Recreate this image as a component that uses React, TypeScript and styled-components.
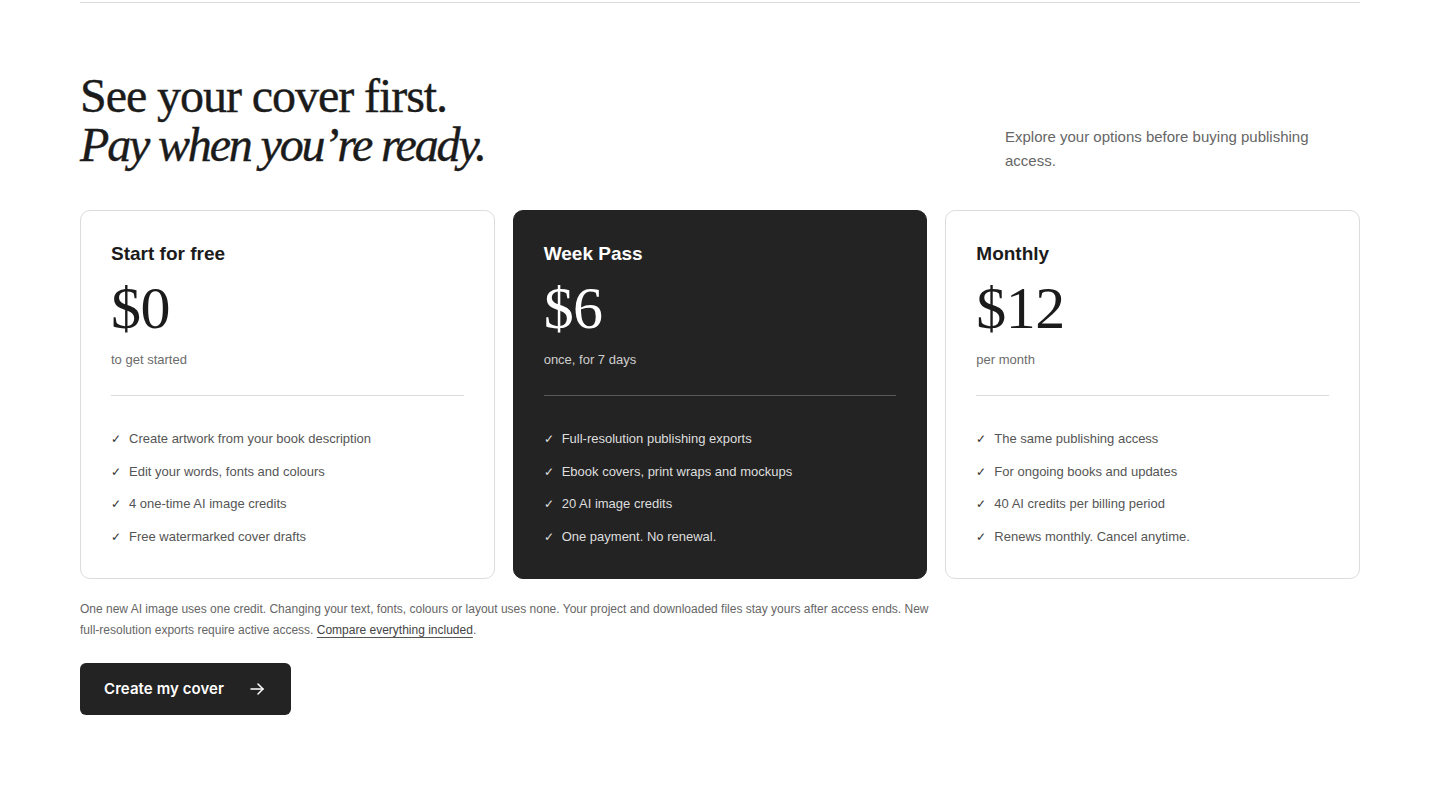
import React from 'react'
import styled, { createGlobalStyle } from 'styled-components'

const GlobalStyle = createGlobalStyle`
  html, body {
    margin: 0;
    padding: 0;
    background: #ffffff;
    font-family: "Liberation Sans", Arial, sans-serif;
    color: #1d1d1d;
  }
  * { box-sizing: border-box; }
`

const Page = styled.div`
  width: 1280px;
  margin: 0 auto;
  padding-top: 2px;
`

const TopRule = styled.div`
  border-top: 1px solid #dcdcdc;
`

const Header = styled.header`
  display: flex;
  justify-content: space-between;
  align-items: flex-end;
  margin-top: 68px;
`

const Headline = styled.h1`
  margin: 0;
  font-family: "Liberation Serif", "Times New Roman", serif;
  font-weight: 400;
  font-size: 48px;
  line-height: 49px;
  letter-spacing: -0.022em;
  color: #1b1b1b;
  -webkit-text-stroke: 0.4px #1b1b1b;

  em {
    display: block;
    font-style: italic;
    letter-spacing: -0.045em;
  }
`

const Intro = styled.p`
  margin: 0 0 -4px;
  width: 355px;
  font-size: 15px;
  line-height: 24px;
  color: #666666;
`

const Cards = styled.div`
  display: grid;
  grid-template-columns: repeat(3, 1fr);
  gap: 18px;
  margin-top: 41px;
`

const Card = styled.div<{ $dark?: boolean }>`
  display: flex;
  flex-direction: column;
  padding: 30px 30px 31px;
  border-radius: 10px;
  border: 1px solid ${p => (p.$dark ? '#232323' : '#dcdcdc')};
  background: ${p => (p.$dark ? '#232323' : '#ffffff')};
  color: ${p => (p.$dark ? '#ffffff' : '#1b1b1b')};
`

const PlanName = styled.h2`
  margin: 0;
  font-size: 19px;
  line-height: 25px;
  font-weight: 700;
`

const Price = styled.div`
  margin-top: 12px;
  font-family: "Liberation Serif", "Times New Roman", serif;
  font-size: 60px;
  line-height: 60px;
  letter-spacing: -0.01em;
`

const PriceNote = styled.p<{ $dark?: boolean }>`
  margin: 12px 0 0;
  font-size: 13px;
  line-height: 20px;
  color: ${p => (p.$dark ? '#cfcfcf' : '#6b6b6b')};
`

const Divider = styled.hr<{ $dark?: boolean }>`
  margin: 25px 0 0;
  border: 0;
  border-top: 1px solid ${p => (p.$dark ? '#5a5a5a' : '#dcdcdc')};
`

const Features = styled.ul`
  list-style: none;
  margin: 33px 0 0;
  padding: 0;
  display: flex;
  flex-direction: column;
  gap: 12.5px;
`

const Feature = styled.li<{ $dark?: boolean }>`
  display: flex;
  align-items: center;
  gap: 8px;
  font-size: 13px;
  line-height: 20px;
  color: ${p => (p.$dark ? '#dedede' : '#555555')};
`

const Check = styled.span<{ $dark?: boolean }>`
  width: 10px;
  font-size: 12px;
  color: ${p => (p.$dark ? '#dedede' : '#333333')};
`

const Footnote = styled.p`
  margin: 20px 0 0;
  max-width: 860px;
  font-size: 12px;
  line-height: 21px;
  color: #666666;

  a {
    color: #444444;
    text-decoration: underline;
    text-decoration-color: #555555;
    text-underline-offset: 3px;
  }
`

const CtaButton = styled.button`
  display: inline-flex;
  align-items: center;
  gap: 26px;
  margin-top: 22px;
  height: 52px;
  padding: 0 27px 0 24px;
  border: 0;
  border-radius: 6px;
  background: #232323;
  color: #ffffff;
  font-family: Inter, "Liberation Sans", sans-serif;
  font-size: 15px;
  font-weight: 600;
  letter-spacing: 0.005em;
  cursor: pointer;
`

const plans = [
  {
    name: 'Start for free',
    price: '$0',
    note: 'to get started',
    features: [
      'Create artwork from your book description',
      'Edit your words, fonts and colours',
      '4 one-time AI image credits',
      'Free watermarked cover drafts',
    ],
  },
  {
    name: 'Week Pass',
    price: '$6',
    note: 'once, for 7 days',
    dark: true,
    features: [
      'Full-resolution publishing exports',
      'Ebook covers, print wraps and mockups',
      '20 AI image credits',
      'One payment. No renewal.',
    ],
  },
  {
    name: 'Monthly',
    price: '$12',
    note: 'per month',
    features: [
      'The same publishing access',
      'For ongoing books and updates',
      '40 AI credits per billing period',
      'Renews monthly. Cancel anytime.',
    ],
  },
]

function Arrow() {
  return (
    <svg width="14" height="12" viewBox="0 0 14 12" fill="none" stroke="currentColor" strokeWidth="1.5" strokeLinecap="round" strokeLinejoin="round">
      <path d="M1 6h12" />
      <path d="M8 1l5 5-5 5" />
    </svg>
  )
}

export default function App() {
  return (
    <>
      <GlobalStyle />
      <Page>
        <TopRule />
        <Header>
          <Headline>
            See your cover first.
            <em>Pay when you’re ready.</em>
          </Headline>
          <Intro>Explore your options before buying publishing access.</Intro>
        </Header>

        <Cards>
          {plans.map(plan => (
            <Card key={plan.name} $dark={plan.dark}>
              <PlanName>{plan.name}</PlanName>
              <Price>{plan.price}</Price>
              <PriceNote $dark={plan.dark}>{plan.note}</PriceNote>
              <Divider $dark={plan.dark} />
              <Features>
                {plan.features.map(f => (
                  <Feature key={f} $dark={plan.dark}>
                    <Check $dark={plan.dark}>✓</Check>
                    {f}
                  </Feature>
                ))}
              </Features>
            </Card>
          ))}
        </Cards>

        <Footnote>
          One new AI image uses one credit. Changing your text, fonts, colours or layout uses none. Your project and
          downloaded files stay yours after access ends. New full-resolution exports require active access.{' '}
          <a href="#">Compare everything included</a>.
        </Footnote>

        <CtaButton>
          Create my cover
          <Arrow />
        </CtaButton>
      </Page>
    </>
  )
}
